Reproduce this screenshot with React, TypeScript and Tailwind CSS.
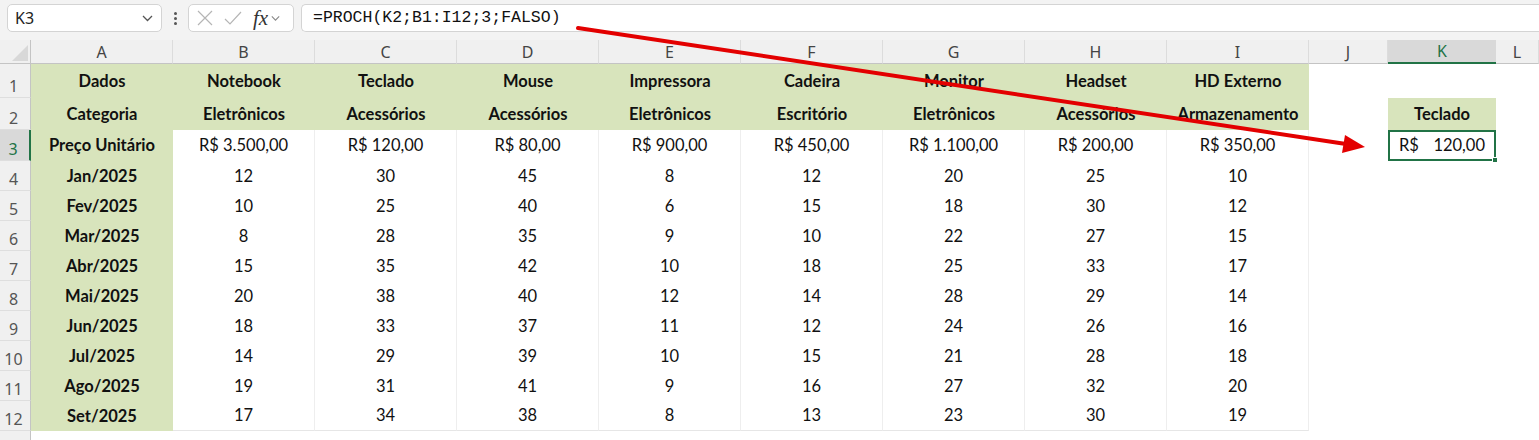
import React from "react";

const cols = ["A", "B", "C", "D", "E", "F", "G", "H", "I", "J", "K", "L"];
const row1 = ["Dados", "Notebook", "Teclado", "Mouse", "Impressora", "Cadeira", "Monitor", "Headset", "HD Externo"];
const row2 = ["Categoria", "Eletrônicos", "Acessórios", "Acessórios", "Eletrônicos", "Escritório", "Eletrônicos", "Acessórios", "Armazenamento"];
const row3 = ["Preço Unitário", "R$ 3.500,00", "R$ 120,00", "R$ 80,00", "R$ 900,00", "R$ 450,00", "R$ 1.100,00", "R$ 200,00", "R$ 350,00"];
const data: [string, number[]][] = [
  ["Jan/2025", [12, 30, 45, 8, 12, 20, 25, 10]],
  ["Fev/2025", [10, 25, 40, 6, 15, 18, 30, 12]],
  ["Mar/2025", [8, 28, 35, 9, 10, 22, 27, 15]],
  ["Abr/2025", [15, 35, 42, 10, 18, 25, 33, 17]],
  ["Mai/2025", [20, 38, 40, 12, 14, 28, 29, 14]],
  ["Jun/2025", [18, 33, 37, 11, 12, 24, 26, 16]],
  ["Jul/2025", [14, 29, 39, 10, 15, 21, 28, 18]],
  ["Ago/2025", [19, 31, 41, 9, 16, 27, 32, 20]],
  ["Set/2025", [17, 34, 38, 8, 13, 23, 30, 19]],
];

const cellFont = "font-['Lato',_'Liberation_Sans',_sans-serif] text-[16.5px] text-[#111]";

function RowHead({ n, active }: { n: number; active?: boolean }) {
  return (
    <div
      className={
        "flex items-end justify-center pr-[3px] border-b border-[#dedede] text-[16px] font-['Noto_Sans',_sans-serif] leading-none " +
        (active
          ? "bg-[#d9d9d9] border-r-2 border-r-[#217346] text-[#217346]"
          : "bg-[#f0f0f0] border-r border-r-[#c4c4c4] text-[#555]")
      }
    >
      <span className="pb-[3px]">{n}</span>
    </div>
  );
}

function Chevron({ className }: { className?: string }) {
  return (
    <svg width="11" height="7" viewBox="0 0 11 7" className={className}>
      <polyline points="1,1 5.5,5.5 10,1" fill="none" stroke="currentColor" strokeWidth="1.3" />
    </svg>
  );
}

export default function App() {
  return (
    <div className="relative w-[1539px] h-[440px] overflow-hidden bg-white">
      {/* formula bar */}
      <div className="flex items-start h-[40px] bg-[#f3f3f3] pt-[4px] pl-[7px] gap-0">
        <div className="flex items-center justify-between w-[155px] h-[28px] bg-white border border-[#d4d4d4] rounded-[5px] pl-[7px] pr-[8px]">
          <span className="text-[16px] text-[#222] font-['Noto_Sans',_sans-serif]">K3</span>
          <Chevron className="text-[#555]" />
        </div>
        <div className="flex flex-col items-center justify-center gap-[2px] w-[26px] h-[28px]">
          <span className="block w-[3px] h-[3px] rounded-full bg-[#555]" />
          <span className="block w-[3px] h-[3px] rounded-full bg-[#555]" />
          <span className="block w-[3px] h-[3px] rounded-full bg-[#555]" />
        </div>
        <div className="flex items-center w-[106px] h-[28px] bg-white border border-[#d4d4d4] rounded-[5px] pl-[7px] pr-[4px]">
          <svg width="18" height="18" viewBox="0 0 18 18">
            <path d="M2 2 L16 16 M16 2 L2 16" stroke="#b5b5b5" strokeWidth="1.2" fill="none" />
          </svg>
          <svg width="20" height="18" viewBox="0 0 20 18" className="ml-[9px]">
            <path d="M2 10 L7 15 L18 3" stroke="#b5b5b5" strokeWidth="1.2" fill="none" />
          </svg>
          <span className="ml-[10px] italic text-[21px] leading-none text-[#333] font-['Liberation_Serif',_serif]">fx</span>
          <Chevron className="ml-[3px] text-[#888] w-[9px]" />
        </div>
        <div className="ml-[7px] flex-1 flex items-center h-[28px] bg-white border border-[#d4d4d4] rounded-l-[5px] border-r-0 pl-[11px]">
          <span className="text-[16.5px] text-[#111] font-['Liberation_Mono',_monospace] leading-none">=PROCH(K2;B1:I12;3;FALSO)</span>
        </div>
      </div>

      {/* sheet grid */}
      <div className="grid grid-cols-[31px_repeat(9,142px)_79px_108px_1fr] grid-rows-[24px_34px_32px_31px_repeat(9,30px)_30px]">
        {/* header row */}
        <div className="relative bg-[#f0f0f0] border-b border-[#c4c4c4] border-r border-r-[#c4c4c4]">
          <svg width="16" height="16" viewBox="0 0 16 16" className="absolute right-[2px] bottom-[2px]">
            <polygon points="16,0 16,16 0,16" fill="#d8d8d8" />
          </svg>
        </div>
        {cols.map((c) =>
          c === "K" ? (
            <div key={c} className="flex items-center justify-center bg-[#d9d9d9] border-b-2 border-[#217346] text-[16px] text-[#217346] font-['Noto_Sans',_sans-serif]">
              {c}
            </div>
          ) : (
            <div key={c} className="flex items-center justify-center bg-[#f0f0f0] border-b border-[#c4c4c4] border-r border-r-[#dcdcdc] text-[16px] text-[#444] font-['Noto_Sans',_sans-serif]">
              {c}
            </div>
          )
        )}

        {/* row 1 */}
        <RowHead n={1} />
        {row1.map((t, i) => (
          <div key={i} className={"flex items-center justify-center bg-[#d8e4bc] font-bold " + cellFont}>
            {t}
          </div>
        ))}
        <div />
        <div />
        <div />

        {/* row 2 */}
        <RowHead n={2} />
        {row2.map((t, i) => (
          <div key={i} className={"flex items-center justify-center bg-[#d8e4bc] font-bold " + cellFont}>
            {t}
          </div>
        ))}
        <div />
        <div className={"flex items-center justify-center bg-[#d8e4bc] font-bold " + cellFont}>Teclado</div>
        <div />

        {/* row 3 */}
        <RowHead n={3} active />
        {row3.map((t, i) => (
          <div
            key={i}
            className={
              "flex items-center justify-center " +
              cellFont +
              (i === 0 ? " bg-[#d8e4bc] font-bold" : " border-r border-[#eeeeee]")
            }
          >
            {t}
          </div>
        ))}
        <div />
        <div className={"relative flex items-center justify-between px-[9px] border-2 border-[#217346] " + cellFont}>
          <span>R$</span>
          <span>120,00</span>
          <span className="absolute right-[-4px] bottom-[-4px] w-[6px] h-[6px] bg-[#217346] border border-white" />
        </div>
        <div />

        {/* data rows */}
        {data.map(([label, vals], r) => (
          <React.Fragment key={label}>
            <RowHead n={r + 4} />
            <div className={"flex items-center justify-center bg-[#d8e4bc] font-bold " + cellFont}>{label}</div>
            {vals.map((v, i) => (
              <div
                key={i}
                className={
                  "flex items-center justify-center border-r border-[#eeeeee] " + cellFont + (r === 8 ? " border-b border-b-[#e6e6e6]" : "")
                }
              >
                {v}
              </div>
            ))}
            <div />
            <div />
            <div />
          </React.Fragment>
        ))}

        {/* row 13 */}
        <RowHead n={13} />
        <div className="col-span-12" />
      </div>

      {/* arrow overlay */}
      <svg className="absolute left-0 top-0 pointer-events-none" width="1539" height="440" viewBox="0 0 1539 440">
        <line x1="578" y1="28" x2="1346" y2="144" stroke="#e30000" strokeWidth="4" strokeLinecap="round" />
        <polygon points="1365,147 1342,153 1345,135" fill="#e30000" />
      </svg>
    </div>
  );
}
